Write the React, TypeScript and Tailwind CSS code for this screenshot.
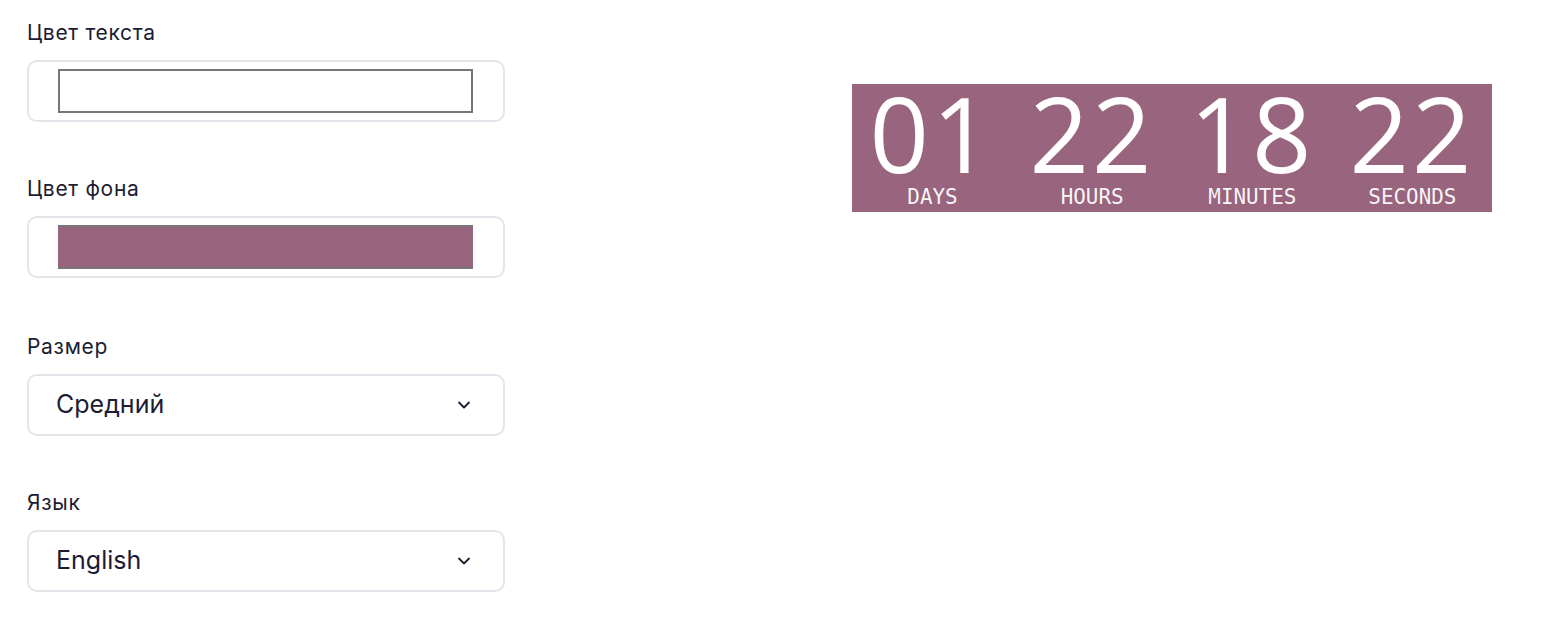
import { ChevronDown } from 'lucide-react';

const ink = 'text-[#1c1c33]';

function Field({ label, className, children }: { label: string; className?: string; children: React.ReactNode }) {
  return (
    <div className={`flex flex-col ${className ?? ''}`}>
      <label className={`text-[21px] leading-[28px] tracking-[0.7px] ${ink}`}>{label}</label>
      <div className="mt-[13px]">{children}</div>
    </div>
  );
}

function ColorBox({ color, bordered }: { color: string; bordered?: boolean }) {
  return (
    <div className="h-[62px] rounded-[10px] border-2 border-[#e4e4ea] bg-white flex items-center pl-[29px] pr-[30px]">
      <div
        className={`h-[44px] w-full ${bordered ? 'border-2 border-[#767676]' : 'border-y-2 border-[#767676]'}`}
        style={{ background: color }}
      />
    </div>
  );
}

function SelectBox({ value }: { value: string }) {
  return (
    <div className="h-[62px] rounded-[10px] border-2 border-[#e4e4ea] bg-white flex items-center justify-between pl-[27px] pr-[29px]">
      <span className={`text-[25px] ${ink}`}>{value}</span>
      <ChevronDown size={20} strokeWidth={2.2} className="text-[#1c1c33]" />
    </div>
  );
}

const units = [
  { n: '01', label: 'DAYS' },
  { n: '22', label: 'HOURS' },
  { n: '18', label: 'MINUTES' },
  { n: '22', label: 'SECONDS' },
];

export default function App() {
  return (
    <div className="min-h-screen bg-white flex items-start pt-[19px] pl-[27px]" style={{ fontFamily: 'Inter, "Noto Sans", sans-serif' }}>
      <div className="w-[478px] flex flex-col gap-[53px]">
        <Field label="Цвет текста">
          <ColorBox color="#ffffff" bordered />
        </Field>
        <Field label="Цвет фона">
          <ColorBox color="#98647e" />
        </Field>
        <Field label="Размер" className="mt-[2px]">
          <SelectBox value="Средний" />
        </Field>
        <Field label="Язык">
          <SelectBox value="English" />
        </Field>
      </div>

      {/* countdown preview */}
      <div className="ml-[347px] mt-[65px] w-[640px] h-[128px] bg-[#98647e] grid grid-cols-4 text-white">
        {units.map((u, i) => (
          <div key={i} className="flex flex-col items-center">
            <span
              className="text-[104px] leading-[86px] mt-[6px] tracking-[3px] font-normal"
              style={{ fontFamily: '"Open Sans", "Noto Sans", sans-serif' }}
            >
              {u.n}
            </span>
            <span
              className="text-[22px] leading-[22px] mt-[10px] scale-x-[0.95] text-white/95"
              style={{ fontFamily: '"DejaVu Sans Mono", monospace' }}
            >
              {u.label}
            </span>
          </div>
        ))}
      </div>
    </div>
  );
}
